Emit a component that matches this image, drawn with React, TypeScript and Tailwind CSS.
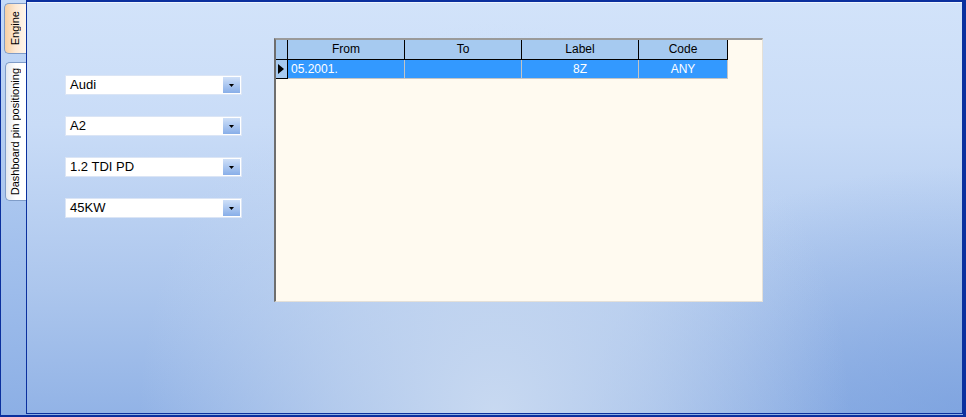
import React from "react";

const FONT = "font-['Liberation_Sans',Arial,sans-serif]";

const COMBOS = ["Audi", "A2", "1.2 TDI PD", "45KW"];

const COLS = [
  { title: "From", w: "w-[117px]" },
  { title: "To", w: "w-[117px]" },
  { title: "Label", w: "w-[117px]" },
  { title: "Code", w: "w-[89px]" },
];

const ROW = [
  { text: "05.2001.", align: "text-left pl-[3px]" },
  { text: "", align: "text-left" },
  { text: "8Z", align: "text-center" },
  { text: "ANY", align: "text-center" },
];

function Combo({ value }: { value: string }) {
  return (
    <div className="flex items-center w-[177px] h-[20px] bg-white border border-[#dbe5f5]">
      <span className="flex-1 pl-[4px] text-[13px] leading-[18px] text-black">{value}</span>
      <div className="flex items-center justify-center w-[17px] h-[16px] mr-[1px] bg-gradient-to-b from-[#cfe0f8] to-[#88aee8]">
        <svg width="5" height="3" viewBox="0 0 5 3">
          <path d="M0 0H5L2.5 3Z" fill="#000" />
        </svg>
      </div>
    </div>
  );
}

function Tab({ label, active }: { label: string; active?: boolean }) {
  return (
    <div
      className={
        "flex items-center justify-center rounded-l-[5px] border border-r-0 border-[#7f9cc8] " +
        (active
          ? "w-[22px] h-[51px] bg-gradient-to-r from-[#f7cfa2] via-[#fde9d4] to-[#fff6ec]"
          : "w-[21px] h-[139px] mt-[8px] ml-[1px] bg-gradient-to-r from-[#e4e8ee] via-white to-white")
      }
    >
      <span className="[writing-mode:vertical-rl] rotate-180 text-[11px] leading-[13px] text-black whitespace-nowrap pl-[1px]">
        {label}
      </span>
    </div>
  );
}

export default function App() {
  return (
    <div className={`${FONT} w-[966px] h-[417px] flex border-l border-r-[3px] border-b-2 border-[#0b309e] bg-gradient-to-b from-[#c6dbf8] to-[#8cafe5]`}>
      <div className="w-[25px] flex flex-col items-end pt-[3px]">
        <Tab label="Engine" active />
        <Tab label="Dashboard pin positioning" />
      </div>

      <div className="w-[937px] h-[414px] border border-t-2 border-[#0b309e] shadow-[inset_0_1px_0_#eef4fd] bg-[radial-gradient(ellipse_38%_95%_at_50%_100%,#c8d9f1_0%,rgba(200,217,241,0.6)_45%,rgba(200,217,241,0)_100%),radial-gradient(ellipse_40%_60%_at_100%_100%,rgba(115,155,220,0.6)_0%,rgba(115,155,220,0)_100%),linear-gradient(to_bottom,#d2e3fa_0%,#c9dcf7_30%,#acc6ed_70%,#92b3e6_100%)] flex items-start pl-[38px] pt-[36px] gap-[32px]">
        <div className="flex flex-col gap-[21px] mt-[37px]">
          {COMBOS.map((c) => (
            <Combo key={c} value={c} />
          ))}
        </div>

        <div className="w-[489px] h-[264px] bg-[#fffaf0] border-l-2 border-t-2 border-l-[#6e6e6e] border-t-[#9a9a9a] border-r border-b border-r-[#e4e0d8] border-b-[#e4e0d8]">
          <div className="flex h-[20px] text-[12px] text-black">
            <div className="w-[12px] bg-[#a6caf0] border-r border-b border-black" />
            {COLS.map((c) => (
              <div key={c.title} className={`${c.w} bg-[#a6caf0] border-r border-b border-black text-center leading-[19px]`}>
                {c.title}
              </div>
            ))}
          </div>
          <div className="flex h-[19px] text-[12px]">
            <div className="w-[12px] bg-[#a6caf0] border-r border-b border-black flex items-center pl-[2px]">
              <svg width="6" height="10" viewBox="0 0 6 10">
                <path d="M0 0L6 5L0 10Z" fill="#000" />
              </svg>
            </div>
            {ROW.map((r, i) => (
              <div
                key={i}
                className={`${COLS[i].w} ${r.align} bg-[#3399ff] border-r border-b border-[#c4c4c4] text-white leading-[18px]`}
              >
                {r.text}
              </div>
            ))}
          </div>
        </div>
      </div>
    </div>
  );
}
